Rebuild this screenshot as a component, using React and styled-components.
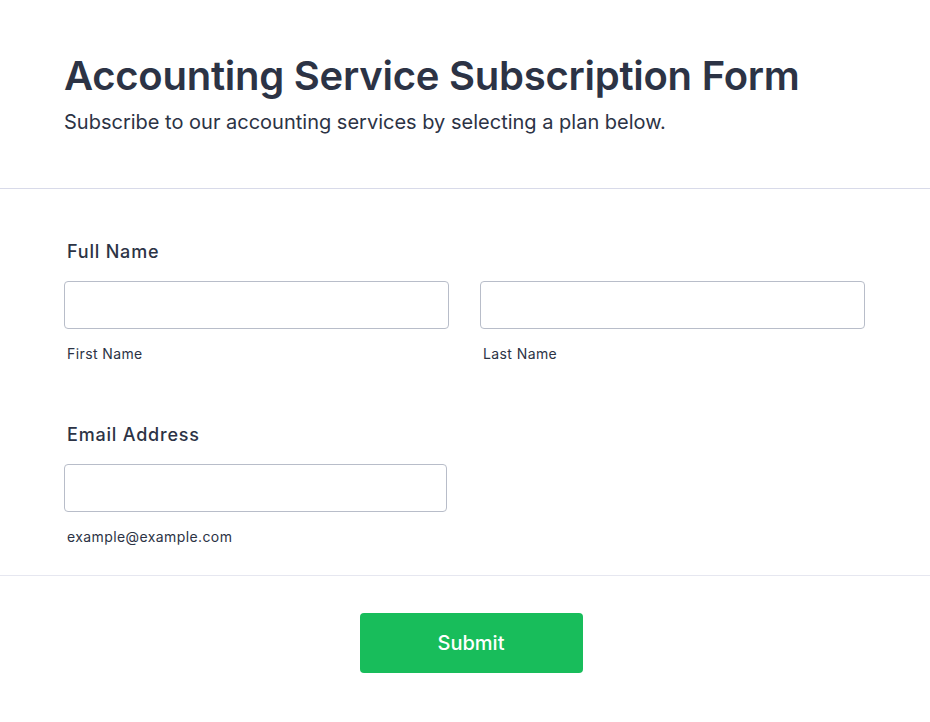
import React from 'react';
import styled, { createGlobalStyle } from 'styled-components';

const GlobalStyle = createGlobalStyle`
  body {
    margin: 0;
    background: #fff;
    font-family: Inter, "Noto Sans", sans-serif;
    color: #2c3345;
  }
`;

const Page = styled.div`
  width: 930px;
`;

const Header = styled.header`
  padding: 52px 64px 52px;
  border-bottom: 1px solid #d8dae9;
`;

const Title = styled.h1`
  margin: 0 0 9px;
  font-size: 40px;
  line-height: 48px;
  font-weight: 600;
  letter-spacing: -0.25px;
`;

const Subtitle = styled.p`
  margin: 0;
  font-size: 20px;
  line-height: 27px;
  font-weight: 400;
`;

const Fields = styled.div`
  padding: 49px 64px 28px;
  display: flex;
  flex-direction: column;
  gap: 57px;
  border-bottom: 1px solid #e6e7f0;
`;

const Field = styled.div`
  display: flex;
  flex-direction: column;
`;

const Label = styled.label`
  padding-left: 3px;
  margin-bottom: 16px;
  font-size: 18px;
  line-height: 27px;
  font-weight: 500;
  letter-spacing: 0.8px;
`;

const Row = styled.div`
  display: grid;
  grid-template-columns: ${p => p.$cols || '385px 385px'};
  column-gap: 31px;
`;

const Control = styled.div`
  display: flex;
  flex-direction: column;
`;

const Input = styled.input`
  box-sizing: border-box;
  width: 100%;
  height: 48px;
  margin: 0 0 14px;
  padding: 0 12px;
  border: 1px solid #b8bdc9;
  border-radius: 4px;
  background: #fff;
  font-family: inherit;
  font-size: 16px;
  color: #2c3345;
  outline: none;
`;

const SubLabel = styled.span`
  padding-left: 3px;
  font-size: 14px;
  line-height: 21px;
  letter-spacing: 0.4px;
  color: #2c3345;
`;

const Footer = styled.div`
  display: flex;
  justify-content: center;
  padding: 37px 0 50px 12px;
`;

const SubmitButton = styled.button`
  width: 223px;
  height: 60px;
  border: none;
  border-radius: 4px;
  background: #18bd5b;
  color: #fff;
  font-family: inherit;
  font-size: 20px;
  font-weight: 500;
  cursor: pointer;
`;

export default function App() {
  return (
    <Page>
      <GlobalStyle />
      <Header>
        <Title>Accounting Service Subscription Form</Title>
        <Subtitle>Subscribe to our accounting services by selecting a plan below.</Subtitle>
      </Header>
      <Fields>
        <Field>
          <Label>Full Name</Label>
          <Row>
            <Control>
              <Input type="text" />
              <SubLabel>First Name</SubLabel>
            </Control>
            <Control>
              <Input type="text" />
              <SubLabel>Last Name</SubLabel>
            </Control>
          </Row>
        </Field>
        <Field>
          <Label>Email Address</Label>
          <Row $cols="383px">
            <Control>
              <Input type="email" />
              <SubLabel>example@example.com</SubLabel>
            </Control>
          </Row>
        </Field>
      </Fields>
      <Footer>
        <SubmitButton type="button">Submit</SubmitButton>
      </Footer>
    </Page>
  );
}
